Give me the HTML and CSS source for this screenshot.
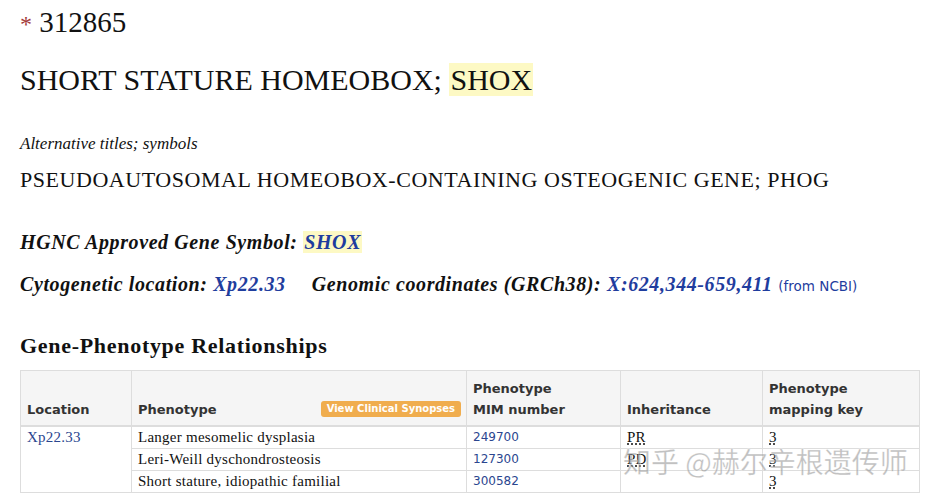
FILE: index.html
```html
<!DOCTYPE html>
<html>
<head>
<meta charset="utf-8">
<link rel="stylesheet" href="styles.css">
</head>
<body>
<div class="page">
  <div class="mim"><span class="star">*</span> 312865</div>
  <div class="title">SHORT STATURE HOMEOBOX; <span class="hl">SHOX</span></div>
  <div class="alt-label">Alternative titles; symbols</div>
  <div class="alt">PSEUDOAUTOSOMAL HOMEOBOX-CONTAINING OSTEOGENIC GENE; PHOG</div>
  <div class="field field-hgnc">HGNC Approved Gene Symbol: <a class="link hl">SHOX</a></div>
  <div class="field field-loc">
    <span>Cytogenetic location: <a class="link">Xp22.33</a></span>
    <span class="coords">Genomic coordinates (GRCh38): <a class="link">X:624,344-659,411</a> <span class="ncbi">(from NCBI)</span></span>
  </div>
  <div class="section">Gene-Phenotype Relationships</div>
  <div class="table-wrap">
    <table class="gp">
      <thead>
        <tr>
          <th class="c-loc">Location</th>
          <th class="c-phen"><div class="phen-head"><span>Phenotype</span><span class="btn">View Clinical Synopses</span></div></th>
          <th class="c-mim">Phenotype<br>MIM number</th>
          <th class="c-inh">Inheritance</th>
          <th class="c-key">Phenotype<br>mapping key</th>
        </tr>
      </thead>
      <tbody>
        <tr>
          <td rowspan="3" class="loc"><a class="tlink">Xp22.33</a></td>
          <td>Langer mesomelic dysplasia</td>
          <td class="num"><a class="tlink">249700</a></td>
          <td><abbr>PR</abbr></td>
          <td><abbr>3</abbr></td>
        </tr>
        <tr>
          <td>Leri-Weill dyschondrosteosis</td>
          <td class="num"><a class="tlink">127300</a></td>
          <td><abbr>PD</abbr></td>
          <td><abbr>3</abbr></td>
        </tr>
        <tr>
          <td>Short stature, idiopathic familial</td>
          <td class="num"><a class="tlink">300582</a></td>
          <td></td>
          <td><abbr>3</abbr></td>
        </tr>
      </tbody>
    </table>
    <div class="watermark">知乎 @赫尔辛根遗传师</div>
  </div>
</div>
</body>
</html>
```
FILE: styles.css
```css
html, body {
  margin: 0;
  padding: 0;
  background: #fff;
}
.page {
  padding: 4px 10px 0 20px;
  font-family: "Liberation Serif", "Times New Roman", serif;
  color: #111;
}
.mim {
  font-size: 29px;
  line-height: 36px;
}
.star {
  color: #a33a3a;
  font-size: 24px;
}
.title {
  font-size: 30px;
  line-height: 36px;
  margin-top: 20px;
}
.hl {
  background: #fdf9c4;
  padding: 0 1px;
}
.alt-label {
  font-style: italic;
  font-size: 17px;
  line-height: 20px;
  margin-top: 36px;
}
.alt {
  font-size: 22px;
  letter-spacing: 0.55px;
  line-height: 26px;
  margin-top: 13px;
}
.field {
  font-style: italic;
  font-weight: bold;
  font-size: 20px;
  letter-spacing: 0.6px;
  line-height: 26px;
}
.field-hgnc {
  margin-top: 36px;
}
.field-loc {
  margin-top: 16px;
  display: flex;
  gap: 26px;
  align-items: baseline;
}
.link {
  color: #1f3d9e;
}
.ncbi {
  font-family: "DejaVu Sans", Verdana, sans-serif;
  font-style: normal;
  font-weight: normal;
  font-size: 13.5px;
  letter-spacing: 0;
  color: #1f3d9e;
}
.section {
  font-weight: bold;
  font-size: 22px;
  letter-spacing: 0.7px;
  line-height: 28px;
  margin-top: 33px;
}
.table-wrap {
  position: relative;
  margin-top: 10px;
  width: 899px;
}
.gp {
  border-collapse: collapse;
  width: 899px;
  table-layout: fixed;
  font-size: 15px;
  letter-spacing: 0.25px;
}
.gp th {
  background: #f5f5f5;
  font-family: "DejaVu Sans", Verdana, sans-serif;
  font-size: 13px;
  font-weight: bold;
  letter-spacing: 0;
  color: #333;
  text-align: left;
  vertical-align: bottom;
  line-height: 21px;
  padding: 4px 6px 5px 6px;
  border: 1px solid #ddd;
  border-bottom: 2px solid #ddd;
  height: 55px;
  box-sizing: border-box;
}
.c-loc { width: 111px; }
.c-phen { width: 335px; }
.c-mim { width: 154px; }
.c-inh { width: 142px; }
.c-key { width: 157px; }
.phen-head {
  display: flex;
  justify-content: space-between;
  align-items: center;
}
.btn {
  background: #f0ad4e;
  color: #fff;
  font-size: 10px;
  line-height: 16px;
  padding: 0 6px;
  border-radius: 3px;
  margin-right: -1px;
}
.gp td {
  border: 1px solid #ddd;
  padding: 0 6px;
  height: 21px;
  line-height: 20px;
  vertical-align: top;
  color: #111;
}
.tlink {
  color: #2b468f;
}
.num {
  font-family: "DejaVu Sans", Verdana, sans-serif;
  font-size: 12px;
  letter-spacing: 0;
}
abbr {
  text-decoration: underline dotted;
  text-underline-offset: 2px;
}
.watermark {
  position: absolute;
  left: 603px;
  top: 74px;
  font-family: "Noto Sans CJK SC", sans-serif;
  font-size: 28px;
  line-height: 34px;
  color: rgba(140, 140, 140, 0.55);
  -webkit-text-stroke: 0.5px rgba(255, 255, 255, 0.6);
  pointer-events: none;
}
```
